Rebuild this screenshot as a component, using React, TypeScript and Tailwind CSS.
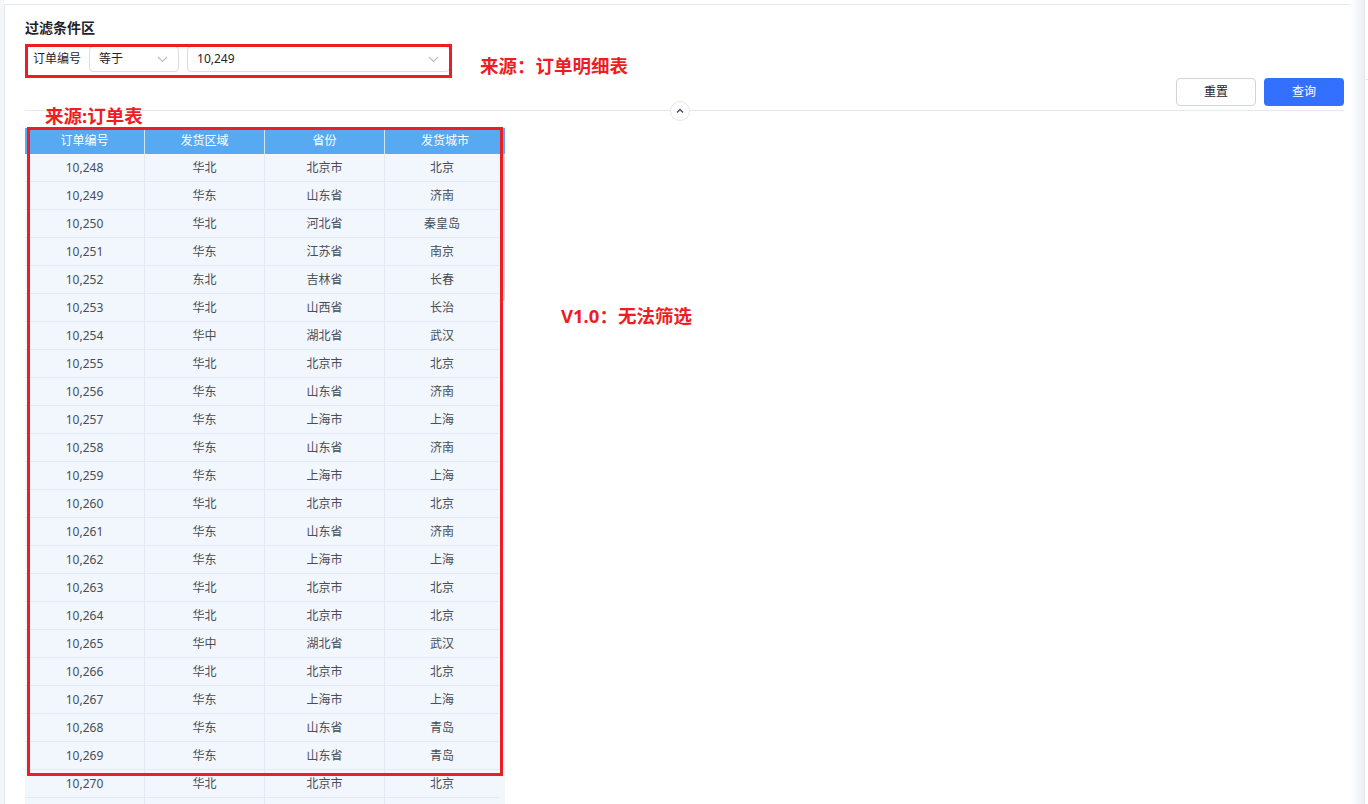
import React from "react";

const rows: [string, string, string, string][] = [
  ["10,248", "华北", "北京市", "北京"],
  ["10,249", "华东", "山东省", "济南"],
  ["10,250", "华北", "河北省", "秦皇岛"],
  ["10,251", "华东", "江苏省", "南京"],
  ["10,252", "东北", "吉林省", "长春"],
  ["10,253", "华北", "山西省", "长治"],
  ["10,254", "华中", "湖北省", "武汉"],
  ["10,255", "华北", "北京市", "北京"],
  ["10,256", "华东", "山东省", "济南"],
  ["10,257", "华东", "上海市", "上海"],
  ["10,258", "华东", "山东省", "济南"],
  ["10,259", "华东", "上海市", "上海"],
  ["10,260", "华北", "北京市", "北京"],
  ["10,261", "华东", "山东省", "济南"],
  ["10,262", "华东", "上海市", "上海"],
  ["10,263", "华北", "北京市", "北京"],
  ["10,264", "华北", "北京市", "北京"],
  ["10,265", "华中", "湖北省", "武汉"],
  ["10,266", "华北", "北京市", "北京"],
  ["10,267", "华东", "上海市", "上海"],
  ["10,268", "华东", "山东省", "青岛"],
  ["10,269", "华东", "山东省", "青岛"],
  ["10,270", "华北", "北京市", "北京"],
  ["", "", "", ""],
];

const font = { fontFamily: '"Noto Sans", "Noto Sans CJK SC", sans-serif' };

function Chevron() {
  return (
    <svg width="11" height="7" viewBox="0 0 11 7">
      <path d="M1 1l4.5 4.5L10 1" fill="none" stroke="#b8bcc6" strokeWidth="1.1" />
    </svg>
  );
}

function Select({ value, width }: { value: string; width: string }) {
  return (
    <div className={`${width} h-[26px] flex items-center justify-between pl-[9px] pr-[10px] border border-[#d9dce3] rounded-[4px] bg-white`}>
      <span className="text-[12px] text-[#1f2329]">{value}</span>
      <Chevron />
    </div>
  );
}

function Table() {
  const heads = ["订单编号", "发货区域", "省份", "发货城市"];
  return (
    <div className="w-[480px]">
      <div className="flex h-[26px] bg-[#57a9f2]">
        {heads.map((h, i) => (
          <div
            key={h}
            className={`w-[120px] flex items-center justify-center pb-[1px] text-[12px] text-white ${i < 3 ? "border-r border-[#cfe6fb]" : ""}`}
          >
            {h}
          </div>
        ))}
      </div>
      <div className="flex">
        <div className="w-[474px]">
          {rows.map((r, k) => (
            <div key={k} className="flex h-[28px] bg-[#f2f6fd] border-b border-[#e4eaf3]">
              {r.map((c, i) => (
                <div
                  key={i}
                  className={`${i < 3 ? "w-[120px] border-r border-[#e4eaf3]" : "w-[114px]"} flex items-center justify-center pt-[1px] text-[12px] text-[#4a4d55]`}
                >
                  {c}
                </div>
              ))}
            </div>
          ))}
        </div>
        <div className="w-[6px] bg-[#f4f6f9] flex justify-end">
          <div className="w-[4px] h-[147px] bg-[#cdd0d6] rounded-[2px]" />
        </div>
      </div>
    </div>
  );
}

export default function App() {
  return (
    <div className="relative w-[1368px] h-[804px] overflow-hidden bg-white flex" style={font}>
      <div className="w-[4px] h-full bg-[#f5f6f7]" />
      <div className="w-[1346px] h-full mt-[4px] border-l border-t border-[#e6e8ec] bg-white">
        <div className="pl-[20px] pr-[6px] pt-[13px]">
          <div className="text-[14px] leading-[20px] font-semibold text-[#1f2329]">过滤条件区</div>
          <div className="mt-[8px] flex items-center">
            <span className="ml-[8px] mr-[8px] text-[12px] text-[#1f2329]">订单编号</span>
            <Select value="等于" width="w-[90px]" />
            <div className="w-[8px]" />
            <Select value="10,249" width="w-[263px]" />
          </div>
          <div className="mt-[6px] flex justify-end gap-[8px]">
            <button className="w-[80px] h-[28px] rounded-[4px] border border-[#d0d3db] bg-white text-[12px] text-[#1f2329]">
              重置
            </button>
            <button className="w-[80px] h-[28px] rounded-[4px] bg-[#3370ff] text-[12px] text-white">查询</button>
          </div>
          <div className="relative mt-[4px] h-[1px] bg-[#e6e8ec]">
            <div className="absolute left-[645px] top-[-9px] w-[20px] h-[20px] rounded-full border border-[#e6e8ec] bg-white flex items-center justify-center">
              <svg width="8" height="6" viewBox="0 0 8 6">
                <path d="M1 4.5L4 1.5l3 3" fill="none" stroke="#3d4a66" strokeWidth="1.4" />
              </svg>
            </div>
          </div>
          <div className="mt-[17px]">
            <Table />
          </div>
        </div>
      </div>
      <div className="w-[14px] h-full bg-gradient-to-r from-white to-[#eceef3]" />
      <div className="w-[4px] h-full border-l border-[#e6e8ec] bg-white">
        <div className="h-[80px] border-b border-[#e6e8ec]" />
      </div>

      {/* annotations */}
      <div className="absolute left-[25px] top-[44px] w-[427px] h-[34px] border-[3px] border-[#ee1d23]" />
      <div className="absolute left-[27px] top-[127px] w-[476px] h-[649px] border-[3px] border-[#ee1d23]" />
      <div className="absolute left-[480px] top-[54px] text-[18.5px] leading-[24px] font-bold text-[#ee1d23]">来源：订单明细表</div>
      <div className="absolute left-[45px] top-[104px] text-[18.5px] leading-[24px] font-bold text-[#ee1d23]">来源:订单表</div>
      <div className="absolute left-[561px] top-[304px] text-[18.5px] leading-[24px] font-bold text-[#ee1d23]">V1.0：无法筛选</div>
    </div>
  );
}
